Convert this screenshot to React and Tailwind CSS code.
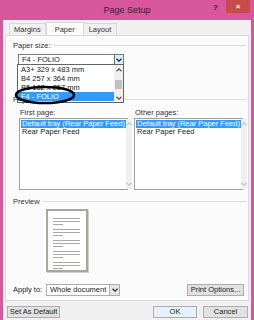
import React from 'react'

const FONT = { fontFamily: '"Liberation Sans", Arial, sans-serif' }

const Chevron = ({ dir = 'down', className = '' }) => (
  <svg className={className} width="6" height="4" viewBox="0 0 6 4" fill="none" stroke="currentColor" strokeWidth="1.2">
    {dir === 'down' ? <path d="M0.5 0.8 3 3.2 5.5 0.8" /> : <path d="M0.5 3.2 3 0.8 5.5 3.2" />}
  </svg>
)

const GroupLabel = ({ children, className = '' }) => (
  <div className={`flex items-center gap-[3px] ${className}`}>
    <span className="text-[7.5px] leading-[9px] text-[#333] whitespace-nowrap">{children}</span>
    <div className="flex-1 h-px bg-[#dcdcdc]" />
  </div>
)

const TrayList = ({ label }) => (
  <div className="flex flex-col w-[109px]">
    <div className="text-[7.5px] leading-[9px] text-[#333] pl-px">{label}</div>
    <div className="mt-[1px] h-[72px] border border-[#a0a0a0] bg-white flex">
      <div className="flex-1 flex flex-col pt-[1px] pl-px text-[7.5px] leading-[8px] text-[#222]">
        <div className="bg-[#3399ff] text-white px-[1px] whitespace-nowrap">Default tray (Rear Paper Feed)</div>
        <div className="px-[1px] whitespace-nowrap">Rear Paper Feed</div>
      </div>
      <div className="w-[10px] bg-[#f0f0f0] flex flex-col items-center justify-between py-[3px] text-[#c4c4c4]">
        <Chevron dir="up" />
        <Chevron dir="down" />
      </div>
    </div>
  </div>
)

const PagePreview = () => {
  const groups = [0, 1, 2, 3, 4]
  return (
    <div className="w-[42px] h-[63px] bg-[#a9a59f] p-[2px] shadow-[1px_1px_0_#cfcfcf]">
      <svg width="38" height="59" viewBox="0 0 38 59" className="bg-white block">
        {groups.map((g) => (
          <g key={g} stroke="#a8a8a8" strokeWidth="1">
            <line x1="5" x2="32" y1={7.5 + g * 11} y2={7.5 + g * 11} />
            <line x1="5" x2="32" y1={10.5 + g * 11} y2={10.5 + g * 11} />
            <line x1="5" x2="15" y1={13.5 + g * 11} y2={13.5 + g * 11} />
          </g>
        ))}
      </svg>
    </div>
  )
}

const Button = ({ children, className = '' }) => (
  <div className={`h-[12px] border border-[#adadad] bg-[#e1e1e1] flex items-center justify-center text-[7.5px] text-[#222] ${className}`}>
    {children}
  </div>
)

const SIZES = ['A3+ 329 x 483 mm', 'B4 257 x 364 mm', 'B5 182 x 257 mm', 'F4 - FOLIO', 'Custom size']

export default function App() {
  return (
    <div className="w-[254px] h-[320px] bg-[#d8579c] flex flex-col overflow-hidden" style={FONT}>
      {/* title bar */}
      <div className="h-[20px] flex items-center relative shrink-0">
        <div className="flex-1 text-center text-[9px] text-[#3a2030] pt-[2px]">Page Setup</div>
        <div className="absolute right-[4px] top-0 flex items-start">
          <span className="text-[8px] text-[#3a2030] mr-[8px] mt-[2px] font-bold">?</span>
          <div className="w-[24px] h-[13px] bg-[#c94a4a] flex items-center justify-center text-white text-[8px] font-bold">×</div>
        </div>
      </div>

      {/* body */}
      <div className="flex-1 mx-[3px] bg-[#f0f0f0] flex flex-col px-[2px] pt-[1px]">
        {/* tabs */}
        <div className="flex items-end h-[14px] pl-[4px] text-[7.5px] text-[#333]">
          <div className="h-[12px] px-[4px] border border-b-0 border-[#d9d9d9] bg-[#f0f0f0] flex items-center">Margins</div>
          <div className="h-[14px] px-[8px] border border-b-0 border-[#d9d9d9] bg-[#fbfbfb] flex items-center relative top-px">Paper</div>
          <div className="h-[12px] px-[5px] border border-b-0 border-l-0 border-[#d9d9d9] bg-[#f0f0f0] flex items-center">Layout</div>
        </div>

        {/* panel */}
        <div className="h-[266px] border border-[#d9d9d9] bg-[#fbfbfb] flex flex-col pl-[7px] pr-[2px] relative">
          <GroupLabel className="mt-[5px]">Paper size:</GroupLabel>
          <div className="ml-[5px] mt-[4px] w-[106px] h-[11px] border border-[#7a7a7a] bg-white flex">
            <div className="flex-1 text-[7.5px] leading-[9px] text-[#222] pl-[3px]">F4 - FOLIO</div>
            <div className="w-[9px] bg-[#dcecfc] border-l border-[#3c7fb1] flex items-center justify-center text-[#222]">
              <Chevron />
            </div>
          </div>

          <GroupLabel className="mt-[30px]">Paper source</GroupLabel>
          <div className="flex gap-[6px] ml-[6px] mt-[4px]">
            <TrayList label="First page:" />
            <TrayList label="Other pages:" />
          </div>

          <GroupLabel className="mt-[7px]">Preview</GroupLabel>
          <div className="ml-[33px] mt-[3px]">
            <PagePreview />
          </div>

          <div className="flex items-center mt-[12px]">
            <span className="text-[7.5px] text-[#222] w-[33px]">Apply to:</span>
            <div className="w-[74px] h-[12px] border border-[#adadad] bg-white flex">
              <div className="flex-1 text-[7.5px] leading-[10px] text-[#222] pl-[3px]">Whole document</div>
              <div className="w-[10px] bg-[#e5e5e5] border-l border-[#adadad] flex items-center justify-center text-[#333]">
                <Chevron />
              </div>
            </div>
            <div className="flex-1" />
            <Button className="w-[57px] mr-[2px]">Print Options...</Button>
          </div>

          {/* open dropdown list */}
          <div className="absolute left-[11px] top-[28px] w-[107px] h-[39px] border border-[#646464] bg-white flex overflow-hidden">
            <div className="flex-1 flex flex-col text-[7.5px] leading-[9px] text-[#222]">
              {SIZES.map((s) => (
                <div
                  key={s}
                  className={`pl-[3px] whitespace-nowrap h-[9px] shrink-0 ${s === 'F4 - FOLIO' ? 'bg-[#3399ff] text-white' : ''}`}
                >
                  {s}
                </div>
              ))}
            </div>
            <div className="w-[9px] bg-[#f0f0f0] flex flex-col items-center text-[#555]">
              <div className="h-[9px] flex items-center"><Chevron dir="up" /></div>
              <div className="w-[7px] h-[9px] bg-[#c2c2c2] mt-[6px]" />
              <div className="flex-1" />
              <div className="h-[8px] flex items-center"><Chevron dir="down" /></div>
            </div>
          </div>

          {/* hand-drawn ellipse */}
          <svg className="absolute left-[8px] top-[49px]" width="62" height="20" viewBox="0 0 62 20">
            <ellipse cx="31" cy="10" rx="29" ry="8" fill="none" stroke="#000" strokeWidth="2.6" />
          </svg>
        </div>

        {/* bottom buttons */}
        <div className="flex items-center mt-[5px] pl-[2px] pr-[1px]">
          <Button className="w-[53px]">Set As Default</Button>
          <div className="flex-1" />
          <Button className="w-[44px] border-[#3c7fb1] bg-[#e5f1fb]">OK</Button>
          <Button className="w-[45px] ml-[6px]">Cancel</Button>
        </div>
      </div>
    </div>
  )
}
